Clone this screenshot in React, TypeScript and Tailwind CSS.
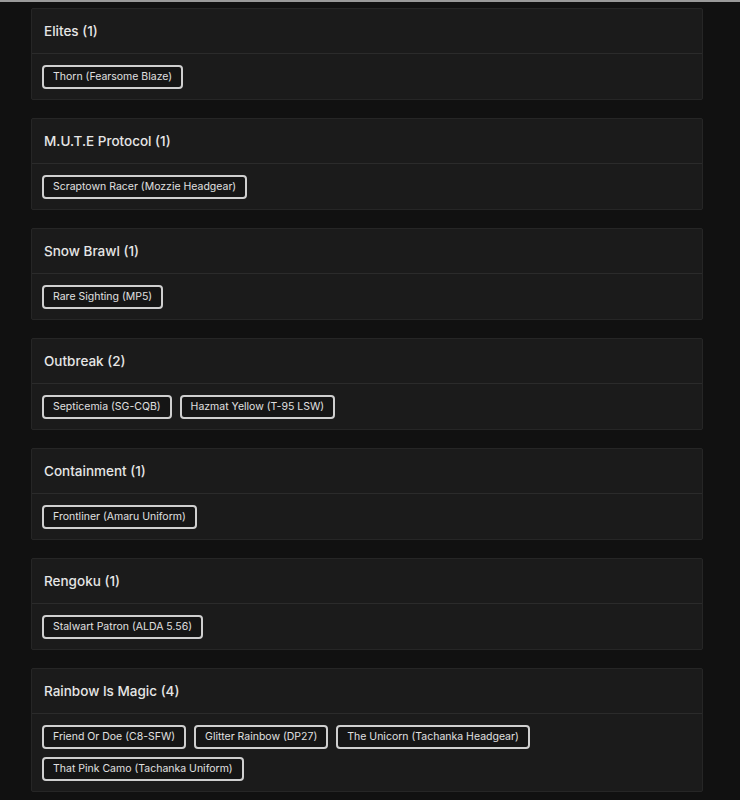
const groups: { title: string; items: string[] }[] = [
  { title: "Elites (1)", items: ["Thorn (Fearsome Blaze)"] },
  { title: "M.U.T.E Protocol (1)", items: ["Scraptown Racer (Mozzie Headgear)"] },
  { title: "Snow Brawl (1)", items: ["Rare Sighting (MP5)"] },
  { title: "Outbreak (2)", items: ["Septicemia (SG-CQB)", "Hazmat Yellow (T-95 LSW)"] },
  { title: "Containment (1)", items: ["Frontliner (Amaru Uniform)"] },
  { title: "Rengoku (1)", items: ["Stalwart Patron (ALDA 5.56)"] },
  {
    title: "Rainbow Is Magic (4)",
    items: [
      "Friend Or Doe (C8-SFW)",
      "Glitter Rainbow (DP27)",
      "The Unicorn (Tachanka Headgear)",
      "That Pink Camo (Tachanka Uniform)",
    ],
  },
];

function CollectionCard({ title, items }: { title: string; items: string[] }) {
  return (
    <section className="rounded-[2px] border border-[#262626] bg-[#1b1b1b]">
      <div className="flex h-[45px] items-center border-b border-[#2b2b2b] px-3">
        <h2 className="text-[13.5px] font-medium text-[#e6e6e6]">{title}</h2>
      </div>
      <div className="flex flex-wrap gap-2 px-[10px] pt-[11px] pb-[10px]">
        {items.map((item) => (
          <button
            key={item}
            className="h-[24px] rounded-[4px] border-2 border-[#cfcfcf] bg-[#151515] px-[9px] text-[10.5px] leading-none text-[#e0e0e0]"
          >
            {item}
          </button>
        ))}
      </div>
    </section>
  );
}

export default function App() {
  return (
    <div className="min-h-[800px] bg-[#111111] font-['Inter',sans-serif]">
      <div className="h-[2px] bg-[#9a9a9a]" />
      <div className="ml-[31px] flex w-[672px] flex-col gap-[18px] pt-[6px]">
        {groups.map((g) => (
          <CollectionCard key={g.title} title={g.title} items={g.items} />
        ))}
      </div>
    </div>
  );
}
